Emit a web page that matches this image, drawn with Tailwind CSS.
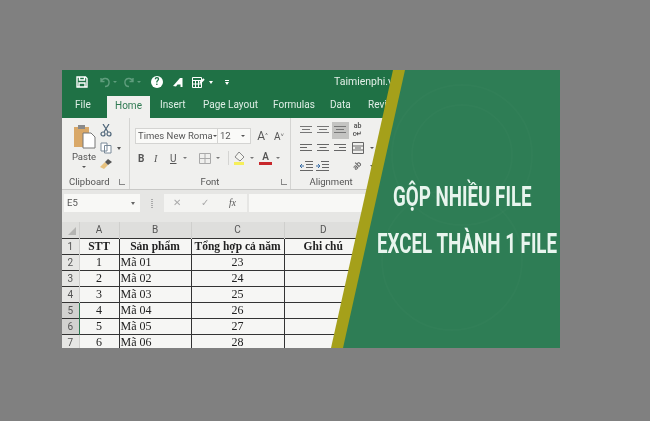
<!DOCTYPE html>
<html lang="en">
<head>
<meta charset="UTF-8">
<title>Gộp nhiều file Excel thành 1 file</title>
<script src="https://cdn.jsdelivr.net/npm/@tailwindcss/browser@4"></script>
</head>
<body class="bg-[#808080] w-[650px] h-[421px] overflow-hidden font-['Roboto',sans-serif]">
<div class="pt-[70px] pl-[62px]">
  <div class="relative w-[498px] h-[278px] overflow-hidden bg-[#f0f0ee] blur-[0.3px]">

    <!-- title bar -->
    <div class="h-[24px] bg-[#1f7145] flex items-center text-white">
      <svg class="ml-[14px] w-[12px] h-[12px]" viewBox="0 0 12 12" fill="none" stroke="#fff" stroke-width="1.4"><path d="M1 1h8.500L11 2.500V11H1z"/><path d="M3.500 1v3h5V1M3 11V7h6v4"/></svg>
      <svg class="ml-[11px] w-[12px] h-[12px]" viewBox="0 0 12 12" fill="none" stroke="#5f9d7d" stroke-width="1.4"><path d="M2 2v3.500h3.500M2.200 5.500A4 4 0 1 1 6 10.500"/></svg>
      <span class="ml-[2px] w-0 h-0 border-x-[2px] border-t-[2px] border-x-transparent border-t-[#5f9d7d]"></span>
      <svg class="ml-[6px] w-[12px] h-[12px]" viewBox="0 0 12 12" fill="none" stroke="#5f9d7d" stroke-width="1.4"><path d="M10 2v3.500H6.500M9.800 5.500A4 4 0 1 0 6 10.500"/></svg>
      <span class="ml-[2px] w-0 h-0 border-x-[2px] border-t-[2px] border-x-transparent border-t-[#5f9d7d]"></span>
      <span class="ml-[10px] w-[12px] h-[12px] rounded-full bg-white text-[#1f7145] text-[10px] leading-[12px] font-bold text-center">?</span>
      <svg class="ml-[10px] w-[11px] h-[11px]" viewBox="0 0 11 11" fill="#fff"><path d="M0 9 7 1h2.500v9H7.500V7.500H4.500L3 9.500z"/></svg>
      <svg class="ml-[7px] w-[14px] h-[13px]" viewBox="0 0 14 13" fill="none" stroke="#fff"><path d="M1.500 1.500h9v10h-9zM1.500 4.500h9M4.500 4.500v7M7.500 4.500v7M1.500 8h9"/><path d="M9 7l4-4" stroke-width="2"/></svg>
      <span class="ml-[4px] w-0 h-0 border-x-[2.500px] border-t-[3px] border-x-transparent border-t-white"></span>
      <span class="ml-[12px] flex flex-col items-center gap-[1px]"><span class="w-[4px] h-[1px] bg-white"></span><span class="w-0 h-0 border-x-[2.500px] border-t-[3px] border-x-transparent border-t-white"></span></span>
      <span class="ml-[105px] text-[10.500px] text-[#e3efe8]">Taimienphi.vn</span>
    </div>

    <!-- tabs -->
    <div class="h-[24px] bg-[#1f7145] flex items-end text-[10px] text-[#dfeee6]">
      <span class="ml-[13px] w-[32px] h-[22px] leading-[18px]">File</span>
      <span class="w-[43px] h-[22px] leading-[19px] text-center bg-[#f0f0ee] text-[#2f7a52]">Home</span>
      <span class="ml-[10px] w-[43px] h-[22px] leading-[18px]">Insert</span>
      <span class="w-[70px] h-[22px] leading-[18px]">Page Layout</span>
      <span class="w-[57px] h-[22px] leading-[18px]">Formulas</span>
      <span class="w-[38px] h-[22px] leading-[18px]">Data</span>
      <span class="h-[22px] leading-[18px]">Review</span>
    </div>

    <!-- ribbon -->
    <div class="h-[72px] flex border-b border-[#c9c9c7] text-[#555]">
      <!-- clipboard -->
      <div class="w-[68px] border-r border-[#d4d4d2] flex flex-col">
        <div class="h-[58px] flex pl-[9px] pt-[6px]">
          <div class="w-[26px] flex flex-col items-center">
            <svg class="w-[23px] h-[25px]" viewBox="0 0 23 25"><path d="M1 3h15v20H1z" fill="#d9a868"/><path d="M5 1h7v4H5z" fill="#8a8a8a"/><path d="M10 9h8l4 4v11H10z" fill="#fff" stroke="#777"/></svg>
            <span class="text-[9.500px] leading-[12px] mt-[2px]">Paste</span>
            <span class="mt-[3px] w-0 h-0 border-x-[2px] border-t-[2px] border-x-transparent border-t-[#555]"></span>
          </div>
          <div class="ml-[3px] flex flex-col gap-[5px]">
            <svg class="w-[12px] h-[13px]" viewBox="0 0 12 13" fill="none" stroke="#4d6478" stroke-width="1.200"><circle cx="3" cy="10" r="2"/><circle cx="9" cy="10" r="2"/><path d="M4 8 9 0M8 8 3 0"/></svg>
            <div class="flex items-center gap-[5px]">
              <svg class="w-[12px] h-[12px]" viewBox="0 0 12 12" fill="#fff" stroke="#7a8a99"><path d="M1 1h6v8H1zM4.500 3.500h6.500V11H4.500z"/></svg>
              <span class="w-0 h-0 border-x-[2.500px] border-t-[3px] border-x-transparent border-t-[#555]"></span>
            </div>
            <svg class="w-[12px] h-[11px]" viewBox="0 0 12 11"><path d="M0 8 5 3l3 3-4 4z" fill="#e8c27e"/><path d="M5 3l3-3 4 3-4 3z" fill="#555"/></svg>
          </div>
        </div>
        <div class="flex items-center justify-between pl-[7px] pr-[4px] text-[9.500px] leading-[12px]">
          <span>Clipboard</span><span class="w-[6px] h-[6px] border-l border-b border-[#888]"></span>
        </div>
      </div>

      <!-- font -->
      <div class="w-[161px] border-r border-[#d4d4d2] flex flex-col">
        <div class="h-[58px] pl-[5px] pt-[10px]">
          <div class="flex items-center h-[16px]">
            <div class="w-[83px] h-[16px] bg-[#fafaf8] border border-[#d4d4d2] flex items-center justify-between px-[2px] text-[9.500px] whitespace-nowrap">
              <span>Times New Roma</span><span class="w-0 h-0 border-x-[2px] border-t-[2px] border-x-transparent border-t-[#555]"></span>
            </div>
            <div class="w-[33px] h-[16px] bg-[#fafaf8] border border-l-0 border-[#d4d4d2] flex items-center justify-between pl-[2px] pr-[5px] text-[9.500px]">
              <span>12</span><span class="w-0 h-0 border-x-[2px] border-t-[2px] border-x-transparent border-t-[#555]"></span>
            </div>
            <span class="ml-[3px] w-[17px] text-[12px] text-center">A<sup class="text-[6px]">^</sup></span>
            <span class="w-[16px] text-[10px] text-center">A<sup class="text-[6px]">˅</sup></span>
          </div>
          <div class="mt-[7px] flex items-center h-[14px] text-[10px]">
            <span class="ml-[3px] w-[16px] font-bold">B</span>
            <span class="w-[16px] font-['Liberation_Serif',serif] italic">I</span>
            <span class="w-[13px] underline">U</span>
            <span class="w-0 h-0 border-x-[2px] border-t-[2px] border-x-transparent border-t-[#777]"></span>
            <svg class="ml-[12px] w-[12px] h-[11px]" viewBox="0 0 12 11" fill="none" stroke="#aaa"><path d="M.5.500h11v10H.5zM6 .5v10M.5 5.500h11"/></svg>
            <span class="ml-[5px] w-0 h-0 border-x-[2px] border-t-[2px] border-x-transparent border-t-[#777]"></span>
            <span class="ml-[8px] w-[1px] h-[14px] bg-[#d4d4d2]"></span>
            <svg class="ml-[4px] w-[14px] h-[14px]" viewBox="0 0 14 14"><path d="M6 1l5 5-4 4-5-4z" fill="#f4f4f0" stroke="#888"/><path d="M1 11h10v3H1z" fill="#f6ef5a"/></svg>
            <span class="ml-[3px] w-0 h-0 border-x-[2px] border-t-[2px] border-x-transparent border-t-[#777]"></span>
            <span class="ml-[5px] flex flex-col items-center w-[13px]">
              <span class="text-[10px] leading-[10px] font-semibold text-[#555]">A</span>
              <span class="w-[13px] h-[3px] bg-[#c8282c]"></span>
            </span>
            <span class="ml-[4px] w-0 h-0 border-x-[2px] border-t-[2px] border-x-transparent border-t-[#777]"></span>
          </div>
        </div>
        <div class="relative text-center text-[9.500px] leading-[12px]">
          Font<span class="absolute right-[3px] top-[3px] w-[6px] h-[6px] border-l border-b border-[#888]"></span>
        </div>
      </div>

      <!-- alignment -->
      <div class="flex-1 flex flex-col">
        <div class="h-[58px] pl-[7px] pt-[3px] grid grid-cols-[16px_17px_18px_17px_12px] grid-rows-[18px_18px_17px] content-start items-center justify-items-center">
          <svg class="w-[12px] h-[8px]" viewBox="0 0 12 8" stroke="#777"><path d="M0 .5h12M2 3.500h8M0 6.500h12"/></svg>
          <svg class="w-[12px] h-[8px]" viewBox="0 0 12 8" stroke="#777"><path d="M0 .5h12M2 3.500h8M0 6.500h12"/></svg>
          <span class="w-[17px] h-[17px] bg-[#c4c4c2] flex items-center justify-center"><svg class="w-[12px] h-[8px]" viewBox="0 0 12 8" stroke="#777"><path d="M0 .5h12M2 3.500h8M0 6.500h12"/></svg></span>
          <span class="text-[7px] leading-[8px] font-semibold text-center text-[#555]">ab<br>c↵</span>
          <span></span>
          <svg class="w-[12px] h-[9px]" viewBox="0 0 12 9" stroke="#666"><path d="M0 .5h12M0 3.500h7M0 6.500h12"/></svg>
          <svg class="w-[12px] h-[9px]" viewBox="0 0 12 9" stroke="#666"><path d="M0 .5h12M2.500 3.500h7M0 6.500h12"/></svg>
          <svg class="w-[12px] h-[9px]" viewBox="0 0 12 9" stroke="#666"><path d="M0 .5h12M5 3.500h7M0 6.500h12"/></svg>
          <svg class="w-[12px] h-[12px]" viewBox="0 0 12 12" fill="none" stroke="#666"><path d="M.5.500h11v11H.5zM.5 4h11M.5 8h11M3 6h6"/></svg>
          <span class="w-0 h-0 border-x-[2px] border-t-[2px] border-x-transparent border-t-[#555]"></span>
          <svg class="w-[13px] h-[10px]" viewBox="0 0 13 10" fill="none" stroke="#666"><path d="M5 .5h8M6 3.500h7M6 6.500h7M0 9.500h13"/><path d="M4 5H0M2 3 0 5l2 2" stroke="#3b6ea5"/></svg>
          <svg class="w-[13px] h-[10px]" viewBox="0 0 13 10" fill="none" stroke="#666"><path d="M5 .5h8M6 3.500h7M6 6.500h7M0 9.500h13"/><path d="M0 5h4M2 3l2 2-2 2" stroke="#3b6ea5"/></svg>
          <span></span>
          <span class="text-[8px] leading-[10px] font-semibold text-[#666] -rotate-45">ab</span>
          <span class="w-0 h-0 border-x-[2px] border-t-[2px] border-x-transparent border-t-[#555]"></span>
        </div>
        <div class="w-[80px] text-center text-[9.500px] leading-[12px]">Alignment</div>
      </div>
    </div>

    <!-- formula bar -->
    <div class="h-[32px] bg-[#e6e6e4] flex items-center pl-[2px] pb-[6px] text-[9.500px] text-[#555]">
      <div class="w-[76px] h-[18px] bg-[#f8f8f6] flex items-center justify-between px-[3px]">
        <span>E5</span><span class="mr-[2px] w-0 h-0 border-x-[2.500px] border-t-[3px] border-x-transparent border-t-[#666]"></span>
      </div>
      <span class="ml-[11px] w-[2px] h-[9px] border-x border-dotted border-[#aaa]"></span>
      <div class="ml-[11px] w-[83px] h-[18px] bg-[#f4f4f2] flex items-center pl-[9px] gap-[20px] text-[#aaa]">
        <span>✕</span><span>✓</span><span class="font-['Liberation_Serif',serif] italic text-[#555]">fx</span>
      </div>
      <div class="ml-[2px] flex-1 h-[18px] bg-[#f8f8f6]"></div>
    </div>

    <!-- sheet -->
    <table class="table-fixed border-collapse w-[300px] font-['Liberation_Serif',serif] text-[12px] text-[#222] bg-[#f6f6f4]">
      <colgroup><col class="w-[17px]"><col class="w-[40px]"><col class="w-[72px]"><col class="w-[93px]"><col></colgroup>
      <thead class="font-['Roboto',sans-serif] text-[10px] font-normal text-[#555] bg-[#dededc]">
        <tr class="h-[16px]">
          <th class="font-normal border-r border-[#cfcfcd]"><span class="block ml-[6px] mt-[3px] w-0 h-0 border-l-[8px] border-b-[8px] border-l-transparent border-b-[#b4b4b2]"></span></th>
          <th class="font-normal border-r border-[#cfcfcd]">A</th>
          <th class="font-normal border-r border-[#cfcfcd]">B</th>
          <th class="font-normal border-r border-[#cfcfcd]">C</th>
          <th class="font-normal">D</th>
        </tr>
      </thead>
      <tbody class="[&_td]:p-0 [&_td]:leading-[15px] [&_tr]:h-[16px]">
        <tr class="font-bold text-[11.500px] text-center border-y border-[#333]">
          <td class="bg-[#e6e6e4] font-['Roboto',sans-serif] font-normal text-[10px] text-[#555] border-r border-[#cfcfcd]">1</td>
          <td class="border-r border-[#333]">STT</td><td class="border-r border-[#333]">Sản phẩm</td><td class="border-r border-[#333]">Tổng hợp cả năm</td><td>Ghi chú</td>
        </tr>
        <tr class="border-b border-[#333]"><td class="bg-[#e6e6e4] font-['Roboto',sans-serif] text-[10px] text-[#555] text-center border-r border-[#cfcfcd]">2</td><td class="text-center border-r border-[#333]">1</td><td class="pl-[1px]! border-r border-[#333]">Mã 01</td><td class="text-center border-r border-[#333]">23</td><td></td></tr>
        <tr class="border-b border-[#333]"><td class="bg-[#e6e6e4] font-['Roboto',sans-serif] text-[10px] text-[#555] text-center border-r border-[#cfcfcd]">3</td><td class="text-center border-r border-[#333]">2</td><td class="pl-[1px]! border-r border-[#333]">Mã 02</td><td class="text-center border-r border-[#333]">24</td><td></td></tr>
        <tr class="border-b border-[#333]"><td class="bg-[#e6e6e4] font-['Roboto',sans-serif] text-[10px] text-[#555] text-center border-r border-[#cfcfcd]">4</td><td class="text-center border-r border-[#333]">3</td><td class="pl-[1px]! border-r border-[#333]">Mã 03</td><td class="text-center border-r border-[#333]">25</td><td></td></tr>
        <tr class="border-b border-[#333]"><td class="bg-[#d2d2d0] font-['Roboto',sans-serif] text-[10px] text-[#555] text-center border-r border-[#2f7a52]">5</td><td class="text-center border-r border-[#333]">4</td><td class="pl-[1px]! border-r border-[#333]">Mã 04</td><td class="text-center border-r border-[#333]">26</td><td></td></tr>
        <tr class="border-b border-[#333]"><td class="bg-[#d2d2d0] font-['Roboto',sans-serif] text-[10px] text-[#555] text-center border-r border-[#2f7a52]">6</td><td class="text-center border-r border-[#333]">5</td><td class="pl-[1px]! border-r border-[#333]">Mã 05</td><td class="text-center border-r border-[#333]">27</td><td></td></tr>
        <tr><td class="bg-[#e6e6e4] font-['Roboto',sans-serif] text-[10px] text-[#555] text-center border-r border-[#cfcfcd]">7</td><td class="text-center border-r border-[#333]">6</td><td class="pl-[1px]! border-r border-[#333]">Mã 06</td><td class="text-center border-r border-[#333]">28</td><td></td></tr>
      </tbody>
    </table>

    <!-- green banner lying over the screenshot -->
    <div class="absolute inset-0 bg-[#a5a01a] [clip-path:polygon(331px_0,100%_0,100%_100%,269px_100%)]"></div>
    <div class="absolute inset-0 bg-[#2e7d55] [clip-path:polygon(343px_0,100%_0,100%_100%,281px_100%)]">
      <svg class="absolute inset-0 w-full h-full" viewBox="0 0 498 278" fill="none" stroke="#fff" stroke-opacity=".015" stroke-width="2"><circle cx="400" cy="85" r="50"/><circle cx="400" cy="85" r="70"/><circle cx="390" cy="190" r="70"/></svg>
      <div class="absolute left-[315px] top-[103px] w-[240px] font-['Roboto',sans-serif] font-bold text-[#e8f5ee] origin-left scale-x-[0.67] text-[28px] leading-[47px] whitespace-nowrap">
        <div class="pl-[24px]">GỘP NHIỀU FILE</div>
        <div>EXCEL THÀNH 1 FILE</div>
      </div>
    </div>
  </div>
</div>
</body>
</html>
